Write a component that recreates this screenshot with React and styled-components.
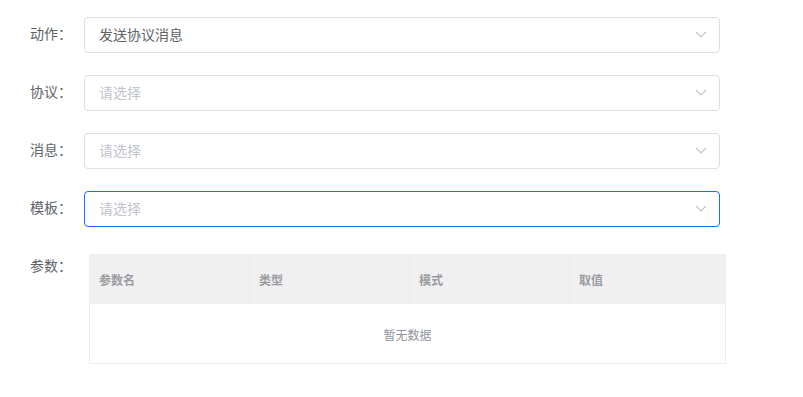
import React from "react";
import styled, { createGlobalStyle } from "styled-components";

const Global = createGlobalStyle`
  html, body { margin: 0; padding: 0; background: #fff; }
  body { font-family: "Noto Sans CJK SC", "Noto Sans", sans-serif; }
`;

const Form = styled.div`
  padding: 17px 0 0 30px;
  width: 690px;
`;

const Item = styled.div`
  display: flex;
  align-items: flex-start;
  margin-bottom: 22px;
`;

const Label = styled.label`
  width: 54px;
  flex: 0 0 54px;
  line-height: 33px;
  font-size: 14px;
  color: #606266;
`;

const Select = styled.div`
  box-sizing: border-box;
  width: 637px;
  height: 36px;
  border: 1px solid ${(p) => (p.$focus ? "#1f6bff" : "#dcdfe6")};
  border-radius: 4px;
  display: flex;
  align-items: center;
  justify-content: space-between;
  padding: 0 12px 2px 14px;
  font-size: 14px;
  color: ${(p) => (p.$placeholder ? "#c0c4cc" : "#606266")};
`;

const Arrow = styled.svg`
  width: 12px;
  height: 12px;
`;

const TableWrap = styled.div`
  padding: 5px;
`;

const Table = styled.div`
  box-sizing: border-box;
  width: 637px;
  border: 1px solid #ebeef5;
`;

const HeadRow = styled.div`
  display: grid;
  grid-template-columns: 160px 160px 160px 1fr;
  background: #f0f0f0;
  height: 48px;
  border-bottom: 1px solid #ebeef5;
`;

const HeadCell = styled.div`
  display: flex;
  align-items: center;
  padding: 0 0 0 9px;
  font-size: 12px;
  font-weight: 600;
  color: #999ba1;
  border-right: ${(p) => (p.$last ? "none" : "1px solid #e8eaf0")};
`;

const Empty = styled.div`
  box-sizing: border-box;
  height: 59px;
  display: flex;
  align-items: center;
  justify-content: center;
  padding-top: 2px;
  font-size: 12px;
  color: #909399;
`;

const Chevron = () => (
  <Arrow viewBox="0 0 12 12" fill="none">
    <path d="M1 4l5 5 5-5" stroke="#c0c4cc" strokeWidth="1.1" />
  </Arrow>
);

const fields = [
  { label: "动作：", value: "发送协议消息" },
  { label: "协议：", placeholder: "请选择" },
  { label: "消息：", placeholder: "请选择" },
  { label: "模板：", placeholder: "请选择", focus: true },
];

export default function App() {
  return (
    <>
      <Global />
      <Form>
        {fields.map((f) => (
          <Item key={f.label}>
            <Label>{f.label}</Label>
            <Select $placeholder={!f.value} $focus={f.focus}>
              <span>{f.value || f.placeholder}</span>
              <Chevron />
            </Select>
          </Item>
        ))}
        <Item>
          <Label>参数：</Label>
          <TableWrap>
            <Table>
              <HeadRow>
                <HeadCell>参数名</HeadCell>
                <HeadCell>类型</HeadCell>
                <HeadCell>模式</HeadCell>
                <HeadCell $last>取值</HeadCell>
              </HeadRow>
              <Empty>暂无数据</Empty>
            </Table>
          </TableWrap>
        </Item>
      </Form>
    </>
  );
}
